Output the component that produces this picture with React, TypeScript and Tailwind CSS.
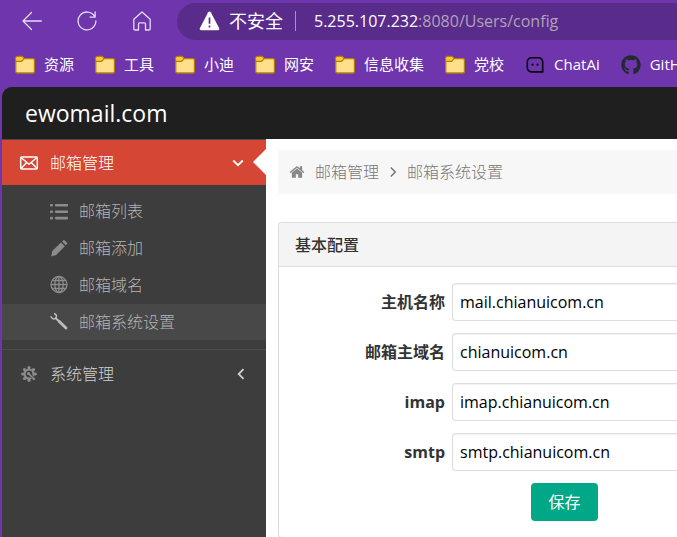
import type { ReactNode } from "react";
import { FaGithub } from "react-icons/fa";

function FolderIcon() {
  return (
    <svg className="h-5 w-5 shrink-0" viewBox="0 0 20 20" aria-hidden="true">
      <path d="M.7 3.2c0-1 .6-1.7 1.6-1.7h5l1.8 2.1h8.600c1.100 0 1.800.7 1.800 1.700v11c0 1-.7 1.700-1.700 1.700H2.400c-1 0-1.700-.7-1.700-1.700z" fill="#ffe08a" stroke="#b57d0c" strokeWidth="1.400" />
      <path d="M1.400 6.300V3.300c0-.7.4-1.100 1-1.100h4.600L8.500 4 6.800 6.300z" fill="#fcc92f" />
      <path d="M.9 6.400h5.800l2.400-2.700" fill="none" stroke="#b57d0c" strokeWidth="1.200" />
    </svg>
  );
}

function ChatIcon() {
  return (
    <svg className="h-5 w-5 shrink-0" viewBox="0 0 20 20" aria-hidden="true">
      <path d="M6.500 2.800h7a4.200 4.200 0 0 1 4.200 4.200v9.900H6.500a4.200 4.200 0 0 1-4.200-4.200V7a4.200 4.200 0 0 1 4.200-4.200z" fill="none" stroke="#07040c" strokeWidth="1.600" />
      <circle cx="7.500" cy="9.700" r="1.100" fill="#07040c" />
      <circle cx="12.500" cy="9.700" r="1.100" fill="#07040c" />
    </svg>
  );
}

const bookmarks: { label: string; icon: ReactNode }[] = [
  { label: "资源", icon: <FolderIcon /> },
  { label: "工具", icon: <FolderIcon /> },
  { label: "小迪", icon: <FolderIcon /> },
  { label: "网安", icon: <FolderIcon /> },
  { label: "信息收集", icon: <FolderIcon /> },
  { label: "党校", icon: <FolderIcon /> },
  { label: "ChatAi", icon: <ChatIcon /> },
  { label: "GitHub", icon: <FaGithub className="h-5 w-5 shrink-0 text-[#24292f]" /> },
];

function Toolbar() {
  return (
    <div className="flex h-[42px] items-center pl-[22px]">
      <button type="button" aria-label="后退" className="mr-[35px]">
        <svg className="h-5 w-5" viewBox="0 0 20 20" fill="none" stroke="#e6dcf3" strokeWidth="1.300" strokeLinecap="round" strokeLinejoin="round">
          <path d="M19.300 10H1M9.500 1.500 1 10l8.500 8.500" />
        </svg>
      </button>
      <button type="button" aria-label="刷新" className="mr-9">
        <svg className="h-5 w-5" viewBox="0 0 22 22" fill="none" stroke="#e6dcf3" strokeWidth="1.400" strokeLinecap="round" strokeLinejoin="round">
          <path d="M20.800 11A9.800 9.800 0 1 1 19.300 5.700M20 1v5.700h-5.700" />
        </svg>
      </button>
      <button type="button" aria-label="主页" className="mr-[26px]">
        <svg className="h-5 w-[18px]" viewBox="0 0 18 20" fill="none" stroke="#e6dcf3" strokeWidth="1.300" strokeLinejoin="round">
          <path d="M.8 8.200 9 1l8.200 7.200v9.600c0 .7-.4 1.200-1.200 1.200h-3.500v-6c0-.7-.4-1.200-1.200-1.200H6.700c-.8 0-1.200.5-1.200 1.200v6H2c-.8 0-1.200-.5-1.200-1.200z" />
        </svg>
      </button>
      <div className="flex h-[37px] min-w-0 flex-1 items-center whitespace-nowrap rounded-l-full bg-[#592b8b] pl-[22px] text-white">
        <svg className="mr-[9px] h-5 w-[21px] shrink-0" viewBox="0 0 21 20" aria-hidden="true">
          <path d="M9.200 1.200q1.300-1.600 2.600 0l8.400 16q.7 1.800-1.300 2H2.100q-2-.2-1.300-2z" fill="#fff" />
          <path d="M10.500 6.500v6.300M10.500 14.600v1.900" stroke="#592b8b" strokeWidth="1.700" />
        </svg>
        <span className="text-[18px]">不安全</span>
        <span className="ml-3 mr-[18px] h-5 w-px shrink-0 bg-[#a98fc6]" />
        <span>
          5.255.107.232<span className="text-[#b0a3b6]">:8080/Users/config</span>
        </span>
      </div>
    </div>
  );
}

function Bookmarks() {
  return (
    <nav className="flex h-[45px] items-center gap-[21px] overflow-hidden whitespace-nowrap pl-[15px] text-[15px] text-white">
      {bookmarks.map((b) => (
        <a key={b.label} href="#" className="flex shrink-0 items-center gap-[9px]">
          {b.icon}
          {b.label}
        </a>
      ))}
    </nav>
  );
}

function ListIcon() {
  return (
    <svg className="h-5 w-5" viewBox="0 0 20 20" fill="currentColor">
      <rect x="1" y="3" width="3" height="2.600" rx="1" />
      <rect x="6" y="3" width="13" height="2.600" rx=".8" />
      <rect x="1" y="9.400" width="3" height="2.600" rx="1" />
      <rect x="6" y="9.400" width="13" height="2.600" rx=".8" />
      <rect x="1" y="15.800" width="3" height="2.600" rx="1" />
      <rect x="6" y="15.800" width="13" height="2.600" rx=".8" />
    </svg>
  );
}

function PencilIcon() {
  return (
    <svg className="h-5 w-5" viewBox="0 0 20 20" fill="currentColor">
      <path d="m3.300 13 8.700-8.500 3.800 3.800-8.600 8.600-5 1.500zM13 3.500l1.100-1.100q.8-.6 1.600 0l2.200 2.200q.6.8 0 1.600l-1.100 1.100z" />
    </svg>
  );
}

function GlobeIcon() {
  return (
    <svg className="h-5 w-5" viewBox="0 0 20 20" fill="none" stroke="currentColor" strokeWidth="1.300">
      <circle cx="10" cy="9.500" r="8" />
      <ellipse cx="10" cy="9.500" rx="4.200" ry="8" />
      <path d="M10 1.500v16M2 9.500h16M3.200 5.500h13.600M3.200 13.500h13.600" />
    </svg>
  );
}

function WrenchIcon() {
  return (
    <svg className="h-5 w-5" viewBox="0 0 20 20" fill="none" stroke="currentColor" strokeLinecap="round">
      <path d="M5.600 1.800q2.200.8 1.700 3.100-.6 1.900-2.500 2Q2.800 6.700 2 4.800" strokeWidth="1.500" />
      <path d="m7 6.500 3.500 3.200" strokeWidth="2" />
      <path d="m10.300 9.500 6.700 6.500" strokeWidth="2.800" />
    </svg>
  );
}

function GearIcon() {
  return (
    <svg className="h-5 w-5" viewBox="0 0 20 20" fill="none" stroke="currentColor">
      <circle cx="10" cy="10" r="4.500" strokeWidth="2.200" />
      <g fill="currentColor" stroke="none">
        <circle cx="10" cy="3.700" r="1.600" />
        <circle cx="10" cy="16.300" r="1.600" />
        <circle cx="3.700" cy="10" r="1.600" />
        <circle cx="16.300" cy="10" r="1.600" />
        <circle cx="5.500" cy="5.500" r="1.600" />
        <circle cx="14.500" cy="5.500" r="1.600" />
        <circle cx="5.500" cy="14.500" r="1.600" />
        <circle cx="14.500" cy="14.500" r="1.600" />
      </g>
      <path d="m9.300 9.300 5.500 5.500" stroke="#3d3d3d" strokeWidth="3" />
      <path d="m9 9 6.500 6.500" strokeWidth="1.700" />
      <circle cx="9.500" cy="9.500" r="1.600" fill="currentColor" stroke="none" />
    </svg>
  );
}

const mailItems = [
  { label: "邮箱列表", icon: <ListIcon /> },
  { label: "邮箱添加", icon: <PencilIcon /> },
  { label: "邮箱域名", icon: <GlobeIcon /> },
  { label: "邮箱系统设置", icon: <WrenchIcon />, active: true },
];

function Sidebar() {
  return (
    <aside className="w-[264px] shrink-0 border-t border-[#4a4a4a] bg-[#3d3d3d] font-light">
      <a href="#" className="relative flex h-[45px] items-center bg-[#d64635] pl-[17px] pr-[22px] text-white">
        <svg className="mr-[11px] h-5 w-5" viewBox="0 0 20 20" fill="none" stroke="currentColor" strokeWidth="1.500" strokeLinejoin="round">
          <rect x="1.700" y="4" width="16.600" height="12" rx="1" />
          <path d="m2 4.500 8 6.700 8-6.700M2 15.500l5.500-5.700M18 15.500l-5.500-5.700" />
        </svg>
        <span className="flex-1">邮箱管理</span>
        <svg className="h-3 w-3" viewBox="0 0 12 12" fill="none" stroke="currentColor" strokeWidth="1.800">
          <path d="m1.200 3.500 4.800 4.700 4.800-4.700" />
        </svg>
        <svg className="absolute right-0 top-[9px] h-[26px] w-[13px]" viewBox="0 0 13 26" fill="#fff">
          <path d="M13 0v26L0 13z" />
        </svg>
      </a>
      <ul className="flex flex-col gap-px pb-[9px] pt-2 text-[#b4b4b4]">
        {mailItems.map((item) => (
          <li key={item.label}>
            <a href="#" className={item.active ? "flex h-9 items-center gap-2.5 bg-[#484848] pl-[47px]" : "flex h-9 items-center gap-2.5 pl-[47px]"}>
              <span className={item.active ? "text-[#bdbdbd]" : "text-[#8c8c8c]"}>{item.icon}</span>
              {item.label}
            </a>
          </li>
        ))}
      </ul>
      <a href="#" className="flex h-12 items-center border-t border-[#4b4b4b] pl-[17px] pr-[19px] text-[#d0d0d0]">
        <span className="mr-[11px] text-[#8c8c8c]"><GearIcon /></span>
        <span className="flex-1">系统管理</span>
        <svg className="h-3 w-3" viewBox="0 0 12 12" fill="none" stroke="currentColor" strokeWidth="1.800">
          <path d="M8.500 1.200 3.700 6l4.800 4.800" />
        </svg>
      </a>
    </aside>
  );
}

const fields = [
  { id: "host", label: "主机名称", value: "mail.chianuicom.cn" },
  { id: "domain", label: "邮箱主域名", value: "chianuicom.cn" },
  { id: "imap", label: "imap", value: "imap.chianuicom.cn" },
  { id: "smtp", label: "smtp", value: "smtp.chianuicom.cn" },
];

function Content() {
  return (
    <main className="min-w-0 flex-1 bg-white pl-3 pt-[11px]">
      <nav className="flex h-11 items-center bg-[#f7f7f7] pl-[11px] font-light text-[#777]">
        <svg className="mr-2.5 h-4 w-4 text-[#888]" viewBox="0 0 1792 1792" fill="currentColor" aria-hidden="true">
          <path d="M1472 992v480q0 26-19 45t-45 19h-384v-384h-256v384h-384q-26 0-45-19t-19-45v-480q0-1 .5-3t.5-3l575-474 575 474q1 2 1 6zm223-69l-62 74q-8 9-21 11h-3q-13 0-21-7l-692-577-692 577q-12 8-24 7-13-2-21-11l-62-74q-8-10-7-23.500t11-21.500l719-599q32-26 76-26t76 26l244 204v-195q0-14 9-23t23-9h192q14 0 23 9t9 23v408l219 182q10 8 11 21.500t-7 23.500z" />
        </svg>
        <a href="#">邮箱管理</a>
        <svg className="mx-2 h-3 w-3" viewBox="0 0 12 12" fill="none" stroke="currentColor" strokeWidth="1.500">
          <path d="m3.800 1.500 4.500 4.500-4.500 4.500" />
        </svg>
        <a href="#">邮箱系统设置</a>
      </nav>
      <section className="mt-7 rounded-l border-y border-l border-[#ddd]">
        <h2 className="flex h-11 items-center rounded-tl border-b border-[#ddd] bg-[#f4f4f4] pl-4 font-medium text-[#333]">基本配置</h2>
        <form className="flex flex-col gap-3 py-4" onSubmit={(e) => e.preventDefault()}>
          {fields.map((f) => (
            <div key={f.id} className="flex">
              <label htmlFor={f.id} className="mr-[7px] w-[166px] shrink-0 text-right font-bold leading-[38px] text-[#333]">{f.label}</label>
              <input id={f.id} defaultValue={f.value} className="h-[38px] min-w-0 flex-1 rounded-l border-y border-l border-[#ddd] bg-white px-[7px] text-black shadow-[inset_0_1px_1px_rgba(0,0,0,0.05)] outline-none" />
            </div>
          ))}
          <div className="flex justify-center pl-[173px]">
            <button type="submit" className="h-[38px] rounded bg-[#00a888] px-[17px] text-white">保存</button>
          </div>
        </form>
      </section>
    </main>
  );
}

export default function App() {
  return (
    <div className="flex min-h-screen flex-col overflow-hidden bg-[#6f35ac] font-['Open_Sans','Noto_Sans_CJK_SC',sans-serif] text-base">
      <Toolbar />
      <Bookmarks />
      <div className="ml-0.5 flex flex-1 flex-col overflow-hidden rounded-tl-[10px] bg-[#3d3d3d]">
        <header className="flex h-[52px] items-center bg-[#1f1f1f] pl-[23px] text-[23px] text-white">ewomail.com</header>
        <div className="flex flex-1">
          <Sidebar />
          <Content />
        </div>
      </div>
    </div>
  );
}
